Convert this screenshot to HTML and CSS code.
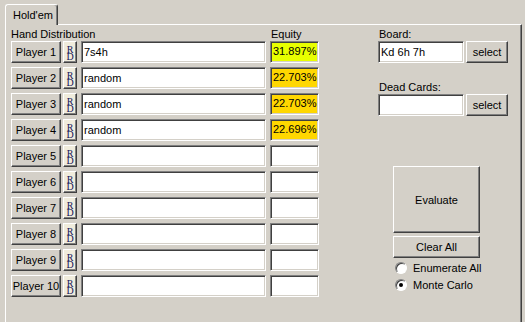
FILE: index.html
```html
<!DOCTYPE html>
<html lang="en">

<head>
    <meta charset="UTF-8">
    <title>Hold'em Equity</title>
    <link rel="stylesheet" href="styles.css">
</head>

<body>
    <div class="tabs">
        <div class="tab">Hold'em</div>
    </div>

    <div class="panel">
        <div class="players">
            <div class="head">
                <span class="head-hand">Hand Distribution</span>
                <span class="head-eq">Equity</span>
            </div>

            <div class="row">
                <button class="btn player">Player 1</button>
                <button class="btn rd">R
D</button>
                <input class="field hand" type="text" value="7s4h">
                <div class="field equity best">31.897%</div>
            </div>
            <div class="row">
                <button class="btn player">Player 2</button>
                <button class="btn rd">R
D</button>
                <input class="field hand" type="text" value="random">
                <div class="field equity hit">22.703%</div>
            </div>
            <div class="row">
                <button class="btn player">Player 3</button>
                <button class="btn rd">R
D</button>
                <input class="field hand" type="text" value="random">
                <div class="field equity hit">22.703%</div>
            </div>
            <div class="row">
                <button class="btn player">Player 4</button>
                <button class="btn rd">R
D</button>
                <input class="field hand" type="text" value="random">
                <div class="field equity hit">22.696%</div>
            </div>
            <div class="row">
                <button class="btn player">Player 5</button>
                <button class="btn rd">R
D</button>
                <input class="field hand" type="text">
                <div class="field equity"></div>
            </div>
            <div class="row">
                <button class="btn player">Player 6</button>
                <button class="btn rd">R
D</button>
                <input class="field hand" type="text">
                <div class="field equity"></div>
            </div>
            <div class="row">
                <button class="btn player">Player 7</button>
                <button class="btn rd">R
D</button>
                <input class="field hand" type="text">
                <div class="field equity"></div>
            </div>
            <div class="row">
                <button class="btn player">Player 8</button>
                <button class="btn rd">R
D</button>
                <input class="field hand" type="text">
                <div class="field equity"></div>
            </div>
            <div class="row">
                <button class="btn player">Player 9</button>
                <button class="btn rd">R
D</button>
                <input class="field hand" type="text">
                <div class="field equity"></div>
            </div>
            <div class="row">
                <button class="btn player">Player 10</button>
                <button class="btn rd">R
D</button>
                <input class="field hand" type="text">
                <div class="field equity"></div>
            </div>
        </div>

        <div class="side">
            <label class="lbl">Board:</label>
            <div class="pick">
                <input class="field cards" type="text" value="Kd 6h 7h">
                <button class="btn select">select</button>
            </div>

            <label class="lbl dead">Dead Cards:</label>
            <div class="pick">
                <input class="field cards" type="text">
                <button class="btn select">select</button>
            </div>

            <button class="btn evaluate">Evaluate</button>
            <button class="btn clear">Clear All</button>

            <div class="radio first"><span class="dot"></span>Enumerate All</div>
            <div class="radio on"><span class="dot"></span>Monte Carlo</div>
        </div>
    </div>
</body>

</html>
```

FILE: styles.css
```css
html,
body {
    margin: 0;
    height: 100%;
    overflow: hidden;
}

body {
    background-color: #d4d0c8; /* classic dialog grey */
    font-family: "Liberation Sans", Arial, sans-serif;
    font-size: 11px;
    color: #000;
}

/* tab strip */
.tabs {
    display: flex;
    padding: 4px 0 0 5px;
}

.tab {
    position: relative;
    z-index: 1;
    box-sizing: border-box;
    width: 53px;
    height: 21px;
    margin-bottom: -1px;
    padding: 3px 0 0 7px;
    line-height: 14px;
    background-color: #d4d0c8;
    border-left: 1px solid #fff;
    border-top: 1px solid #fff;
    border-right: 1px solid #404040;
    border-radius: 3px 3px 0 0;
    box-shadow: inset -1px 0 #808080;
}

.panel {
    display: flex;
    box-sizing: border-box;
    width: 517px;
    height: 298px;
    margin-left: 5px;
    padding: 2px 0 0 5px;
    border-left: 1px solid #fff;
    border-top: 1px solid #fff;
    border-right: 1px solid #404040;
    box-shadow: inset -1px 0 #808080;
}

/* shared 3d controls */
.btn {
    box-sizing: border-box;
    height: 22px;
    margin: 0;
    padding: 0;
    font: inherit;
    color: #000;
    background-color: #d4d0c8;
    border: 1px solid;
    border-color: #fff #404040 #404040 #fff;
    box-shadow: inset -1px -1px #808080;
}

.field {
    box-sizing: border-box;
    height: 22px;
    margin: 0;
    padding: 0 2px;
    font: inherit;
    color: #000;
    background-color: #fff;
    border: 1px solid;
    border-color: #808080 #fff #fff #808080;
    box-shadow: inset 1px 1px #404040, inset -1px -1px #d4d0c8;
    outline: none;
}

/* player list */
.players {
    width: 308px;
}

.head {
    display: flex;
    height: 14px;
    line-height: 14px;
}

.head-hand {
    width: 259px;
}

.head-eq {
    padding-left: 1px;
}

.row {
    display: flex;
    height: 22px;
    margin-top: 4px;
}

.head + .row {
    margin-top: 0;
}

.player {
    width: 50px;
}

/* R over D, one text node */
.rd {
    width: 14px;
    margin-left: 2px;
    padding-top: 1px;
    white-space: pre-line;
    font-family: "Liberation Serif", "Times New Roman", serif;
    font-size: 10px;
    line-height: 7px;
    color: #14145a;
    background-color: #f0ecdc;
}

.hand {
    width: 185px;
    margin-left: 4px;
}

.equity {
    width: 49px;
    margin-left: 4px;
    padding-right: 3px;
    line-height: 19px;
    text-align: right;
}

.best {
    background-color: #e8ff00;
}

.hit {
    background-color: #ffd700;
}

/* board side */
.side {
    display: flex;
    flex-direction: column;
    align-items: flex-start;
    margin-left: 59px;
    width: 132px;
}

.lbl {
    height: 14px;
    line-height: 14px;
    padding-left: 1px;
}

.dead {
    margin-top: 17px;
}

.pick {
    display: flex;
}

.cards {
    width: 86px;
}

.select {
    width: 42px;
    margin-left: 2px;
}

.evaluate {
    width: 87px;
    height: 67px;
    margin: 50px 0 0 15px;
}

.clear {
    width: 87px;
    margin: 3px 0 0 15px;
}

.radio {
    display: flex;
    align-items: center;
    height: 17px;
    margin-left: 17px;
}

.radio.first {
    margin-top: 1px;
}

.dot {
    display: flex;
    align-items: center;
    justify-content: center;
    box-sizing: border-box;
    width: 12px;
    height: 12px;
    margin-right: 6px;
    border: 1px solid;
    border-color: #808080 #fff #fff #808080;
    border-radius: 50%;
    background-color: #fff;
    box-shadow: inset 1px 1px #404040;
}

.radio.on .dot::after {
    content: "";
    width: 4px;
    height: 4px;
    border-radius: 50%;
    background-color: #000;
}
```
